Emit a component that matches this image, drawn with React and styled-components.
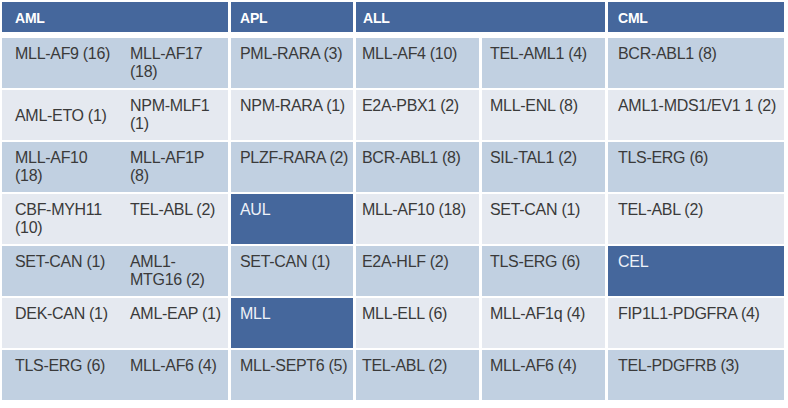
import React from "react";
import styled, { createGlobalStyle } from "styled-components";

const GlobalStyle = createGlobalStyle`
  body {
    margin: 0;
    background: #ffffff;
    font-family: "Liberation Sans", Arial, sans-serif;
  }
`;

const rows = [
  {
    aml: ["MLL-AF9 (16)", "MLL-AF17 (18)"],
    apl: { text: "PML-RARA (3)" },
    all: ["MLL-AF4 (10)", "TEL-AML1 (4)"],
    cml: { text: "BCR-ABL1 (8)" },
  },
  {
    aml: ["AML-ETO (1)", "NPM-MLF1 (1)"],
    amlOffset: 17,
    apl: { text: "NPM-RARA (1)" },
    all: ["E2A-PBX1 (2)", "MLL-ENL (8)"],
    cml: { text: "AML1-MDS1/EV1 1 (2)" },
  },
  {
    aml: ["MLL-AF10 (18)", "MLL-AF1P (8)"],
    apl: { text: "PLZF-RARA (2)" },
    all: ["BCR-ABL1 (8)", "SIL-TAL1 (2)"],
    cml: { text: "TLS-ERG (6)" },
  },
  {
    aml: ["CBF-MYH11 (10)", "TEL-ABL (2)"],
    apl: { text: "AUL", highlight: true },
    all: ["MLL-AF10 (18)", "SET-CAN (1)"],
    cml: { text: "TEL-ABL (2)" },
  },
  {
    aml: ["SET-CAN (1)", "AML1-MTG16 (2)"],
    apl: { text: "SET-CAN (1)" },
    all: ["E2A-HLF (2)", "TLS-ERG (6)"],
    cml: { text: "CEL", highlight: true },
  },
  {
    aml: ["DEK-CAN (1)", "AML-EAP (1)"],
    apl: { text: "MLL", highlight: true },
    all: ["MLL-ELL (6)", "MLL-AF1q (4)"],
    cml: { text: "FIP1L1-PDGFRA (4)" },
  },
  {
    aml: ["TLS-ERG (6)", "MLL-AF6 (4)"],
    apl: { text: "MLL-SEPT6 (5)" },
    all: ["TEL-ABL (2)", "MLL-AF6 (4)"],
    cml: { text: "TEL-PDGFRB (3)" },
  },
];

export default function App() {
  return (
    <>
      <GlobalStyle />
      <Table>
        <HeaderRow>
          <HeadCell $pad={13}>AML</HeadCell>
          <HeadCell $pad={9}>APL</HeadCell>
          <HeadCell $pad={7} $span={2}>
            ALL
          </HeadCell>
          <HeadCell $pad={10}>CML</HeadCell>
        </HeaderRow>

        <Body>
          {rows.map((row, i) => {
            const tone = i % 2 === 0 ? "blue" : "gray";
            return (
              <React.Fragment key={i}>
                <PairCell $tone={tone}>
                  <Entry $pad={13} $right={16} $w={128} $top={row.amlOffset}>
                    {row.aml[0]}
                  </Entry>
                  <Entry $pad={0} $right={4}>
                    {row.aml[1]}
                  </Entry>
                </PairCell>
                <Cell $tone={tone} $pad={9} $highlight={row.apl.highlight}>
                  {row.apl.text}
                </Cell>
                <Cell $tone={tone} $pad={6}>
                  {row.all[0]}
                </Cell>
                <Cell $tone={tone} $pad={8}>
                  {row.all[1]}
                </Cell>
                <Cell $tone={tone} $pad={10} $highlight={row.cml.highlight}>
                  {row.cml.text}
                </Cell>
              </React.Fragment>
            );
          })}
        </Body>
      </Table>
    </>
  );
}

const tones = {
  blue: "#c1d0e1",
  gray: "#e5e9f0",
};

const Table = styled.div`
  padding: 2px 0 0 2px;
  width: 786px;
  box-sizing: border-box;
`;

const HeaderRow = styled.div`
  display: grid;
  grid-template-columns: 226px 122px 123px 123px 176px;
  column-gap: 3px;
  height: 30px;
  margin-bottom: 6px;
`;

const HeadCell = styled.div`
  grid-column: span ${(p) => p.$span || 1};
  background: #45679c;
  color: #ffffff;
  font-weight: bold;
  font-size: 14px;
  display: flex;
  align-items: center;
  padding-left: ${(p) => p.$pad}px;
  padding-top: 1px;
  letter-spacing: -0.2px;
`;

const Body = styled.div`
  display: grid;
  grid-template-columns: 226px 122px 123px 123px 176px;
  grid-auto-rows: 50px;
  column-gap: 3px;
  row-gap: 2px;
`;

const textStyle = `
  font-size: 16px;
  line-height: 18px;
  letter-spacing: -0.3px;
`;

const Cell = styled.div`
  ${textStyle}
  background: ${(p) => (p.$highlight ? "#45679c" : tones[p.$tone])};
  color: ${(p) => (p.$highlight ? "#eef2f8" : "#3a3a3a")};
  padding: 7px 1px 0 ${(p) => p.$pad}px;
  box-sizing: border-box;
`;

const PairCell = styled.div`
  ${textStyle}
  display: flex;
  background: ${(p) => tones[p.$tone]};
  color: #3a3a3a;
`;

const Entry = styled.div`
  box-sizing: border-box;
  ${(p) => (p.$w ? `width: ${p.$w}px; flex: none;` : "flex: 1;")}
  padding: ${(p) => p.$top || 7}px ${(p) => p.$right}px 0 ${(p) => p.$pad}px;
`;
